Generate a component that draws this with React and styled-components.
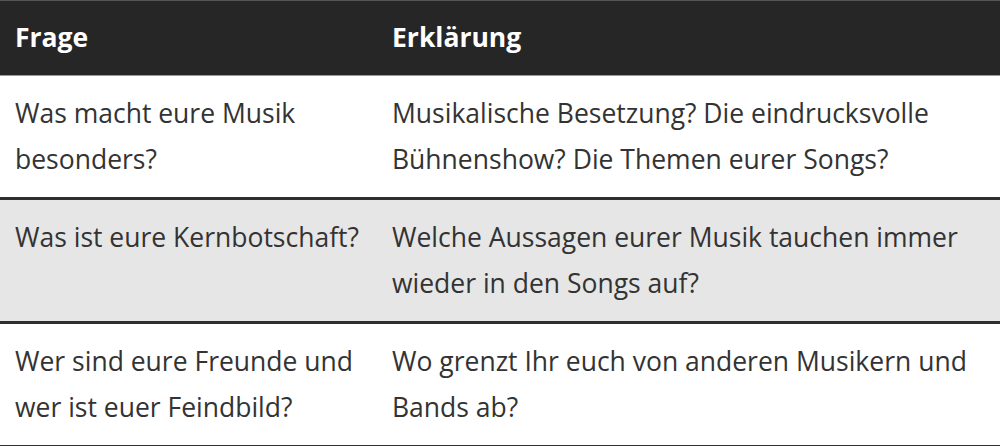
import React from "react";
import styled, { createGlobalStyle } from "styled-components";

const GlobalStyle = createGlobalStyle`
  html, body {
    margin: 0;
    padding: 0;
    background: #fff;
  }
  body {
    font-family: "Open Sans", "DejaVu Sans", sans-serif;
  }
`;

const Table = styled.table`
  width: 1000px;
  border-collapse: collapse;
  table-layout: fixed;
  color: #333;
  font-size: 26.5px;
  line-height: 46px;
`;

const HeadRow = styled.tr`
  background: #262626;
  border-top: 1px solid #555;
  border-bottom: 1px solid #999;
`;

const Th = styled.th`
  height: 72px;
  padding: 0 15px 2px;
  text-align: left;
  font-weight: 700;
  color: #fff;
  vertical-align: middle;
`;

const Row = styled.tr`
  background: ${(p) => (p.$shaded ? "#e6e6e6" : "#fff")};
  border-bottom: 3px solid #2e2e2e;
`;

const Td = styled.td`
  padding: 14px 15px 15px;
  vertical-align: top;
`;

const rows = [
  ["Was macht eure Musik besonders?", "Musikalische Besetzung? Die eindrucksvolle Bühnenshow? Die Themen eurer Songs?"],
  ["Was ist eure Kernbotschaft?", "Welche Aussagen eurer Musik tauchen immer wieder in den Songs auf?"],
  ["Wer sind eure Freunde und wer ist euer Feindbild?", "Wo grenzt Ihr euch von anderen Musikern und Bands ab?"],
];

const App = () => {
  return (
    <>
      <GlobalStyle />
      <Table>
        <colgroup>
          <col style={{ width: "377px" }} />
          <col />
        </colgroup>
        <thead>
          <HeadRow>
            <Th>Frage</Th>
            <Th>Erklärung</Th>
          </HeadRow>
        </thead>
        <tbody>
          {rows.map((r, i) => (
            <Row key={i} $shaded={i === 1}>
              <Td>{r[0]}</Td>
              <Td>{r[1]}</Td>
            </Row>
          ))}
        </tbody>
      </Table>
    </>
  );
};

export default App;
